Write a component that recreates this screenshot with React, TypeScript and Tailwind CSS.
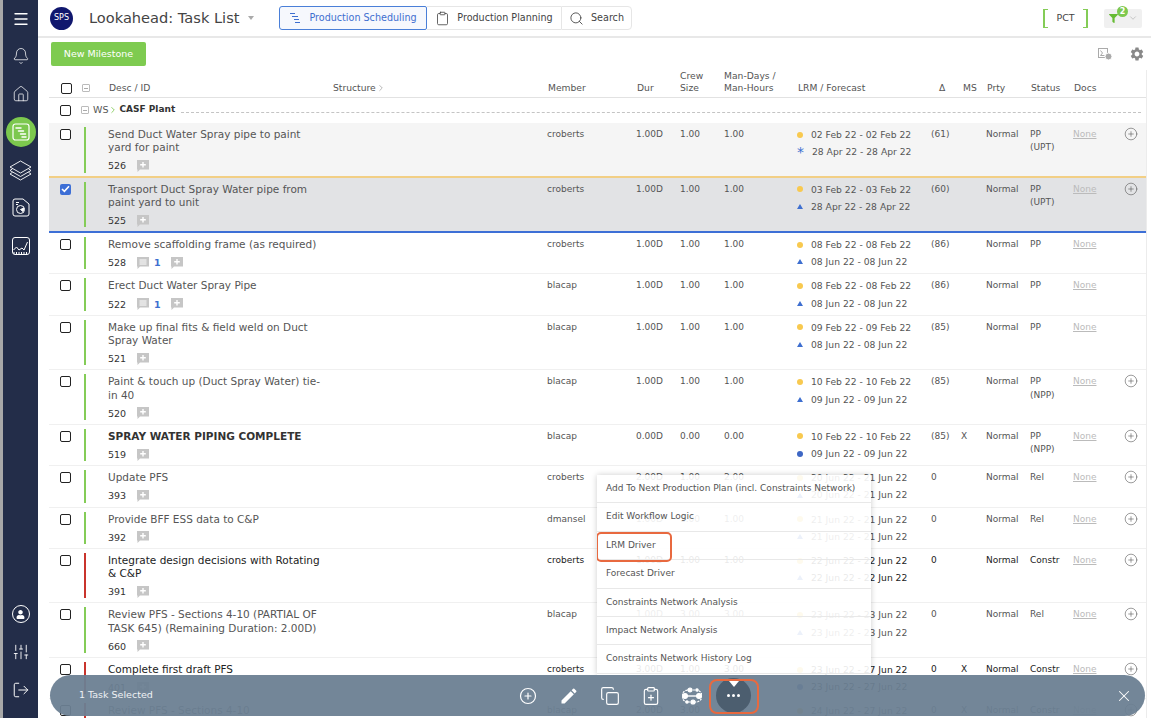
import { Bell, ChevronDown, ChevronRight, CirclePlus, Clipboard, ClipboardPlus, Copy, Home, LogOut, Menu, Search, SlidersVertical, X } from "lucide-react";
import { MdEdit, MdSettings } from "react-icons/md";
import { FaFilter, FaUser } from "react-icons/fa";

type Task = {
  lines: string[];
  id: string;
  bold?: boolean;
  red?: boolean;
  dark?: boolean;
  who: string;
  dur: string;
  crew: string;
  man: string;
  lrm: string;
  fc: string;
  mark?: "star" | "tri" | "dot";
  delta: string;
  ms?: string;
  status: string[];
  plus?: boolean;
  notes?: boolean;
  tone?: "soft" | "selected";
};

const tasks: Task[] = [
  { lines: ["Send Duct Water Spray pipe to paint", "yard for paint"], id: "526", who: "croberts", dur: "1.00D", crew: "1.00", man: "1.00", lrm: "02 Feb 22 - 02 Feb 22", fc: "28 Apr 22 - 28 Apr 22", mark: "star", delta: "(61)", status: ["PP", "(UPT)"], plus: true, tone: "soft" },
  { lines: ["Transport Duct Spray Water pipe from", "paint yard to unit"], id: "525", who: "croberts", dur: "1.00D", crew: "1.00", man: "1.00", lrm: "03 Feb 22 - 03 Feb 22", fc: "28 Apr 22 - 28 Apr 22", delta: "(60)", status: ["PP", "(UPT)"], plus: true, tone: "selected" },
  { lines: ["Remove scaffolding frame (as required)"], id: "528", notes: true, who: "croberts", dur: "1.00D", crew: "1.00", man: "1.00", lrm: "08 Feb 22 - 08 Feb 22", fc: "08 Jun 22 - 08 Jun 22", delta: "(86)", status: ["PP"] },
  { lines: ["Erect Duct Water Spray Pipe"], id: "522", notes: true, who: "blacap", dur: "1.00D", crew: "1.00", man: "1.00", lrm: "08 Feb 22 - 08 Feb 22", fc: "08 Jun 22 - 08 Jun 22", delta: "(86)", status: ["PP"] },
  { lines: ["Make up final fits & field weld on Duct", "Spray Water"], id: "521", who: "blacap", dur: "1.00D", crew: "1.00", man: "1.00", lrm: "09 Feb 22 - 09 Feb 22", fc: "08 Jun 22 - 08 Jun 22", delta: "(85)", status: ["PP"] },
  { lines: ["Paint & touch up (Duct Spray Water) tie-", "in 40"], id: "520", who: "blacap", dur: "1.00D", crew: "1.00", man: "1.00", lrm: "10 Feb 22 - 10 Feb 22", fc: "09 Jun 22 - 09 Jun 22", delta: "(85)", status: ["PP", "(NPP)"], plus: true },
  { lines: ["SPRAY WATER PIPING COMPLETE"], id: "519", bold: true, who: "blacap", dur: "0.00D", crew: "0.00", man: "0.00", lrm: "10 Feb 22 - 10 Feb 22", fc: "09 Jun 22 - 09 Jun 22", mark: "dot", delta: "(85)", ms: "X", status: ["PP", "(NPP)"], plus: true },
  { lines: ["Update PFS"], id: "393", who: "croberts", dur: "2.00D", crew: "1.00", man: "2.00", lrm: "20 Jun 22 - 21 Jun 22", fc: "20 Jun 22 - 21 Jun 22", delta: "0", status: ["Rel"], plus: true },
  { lines: ["Provide BFF ESS data to C&P"], id: "392", who: "dmansel", dur: "1.00D", crew: "1.00", man: "1.00", lrm: "21 Jun 22 - 21 Jun 22", fc: "21 Jun 22 - 21 Jun 22", delta: "0", status: ["Rel"], plus: true },
  { lines: ["Integrate design decisions with Rotating", "& C&P"], id: "391", red: true, dark: true, who: "croberts", dur: "1.00D", crew: "1.00", man: "1.00", lrm: "22 Jun 22 - 22 Jun 22", fc: "22 Jun 22 - 22 Jun 22", delta: "0", status: ["Constr"], plus: true },
  { lines: ["Review PFS - Sections 4-10 (PARTIAL OF", "TASK 645) (Remaining Duration: 2.00D)"], id: "660", who: "blacap", dur: "1.00D", crew: "3.00", man: "3.00", lrm: "23 Jun 22 - 23 Jun 22", fc: "23 Jun 22 - 23 Jun 22", delta: "0", status: ["Rel"], plus: true },
  { lines: ["Complete first draft PFS"], id: "401", red: true, dark: true, who: "croberts", dur: "3.00D", crew: "1.00", man: "3.00", lrm: "23 Jun 22 - 27 Jun 22", fc: "23 Jun 22 - 27 Jun 22", mark: "dot", delta: "0", ms: "X", status: ["Constr"], plus: true },
  { lines: ["Review PFS - Sections 4-10"], id: "402", red: true, who: "blacap", dur: "2.00D", crew: "3.00", man: "6.00", lrm: "24 Jun 22 - 27 Jun 22", fc: "24 Jun 22 - 27 Jun 22", delta: "0", ms: "X", status: ["Constr"], plus: true },
];

const menuItems = [
  "Add To Next Production Plan (incl. Constraints Network)",
  "Edit Workflow Logic",
  "LRM Driver",
  "Forecast Driver",
  "Constraints Network Analysis",
  "Impact Network Analysis",
  "Constraints Network History Log",
];

const columns = "grid grid-cols-[35px_24px_439px_89px_44px_44px_73px_134px_30px_25px_44px_43px_51px_22px]";

function TaskListIcon({ size = 18 }: { size?: number }) {
  return (
    <svg width={size} height={size} viewBox="0 0 18 18" fill="none" stroke="white" strokeWidth="1.2" strokeLinecap="round">
      <rect x="1" y="1" width="16" height="16" rx="2.5" />
      <path d="M4 5h5M6.5 8h5M8.5 11h5M10 14h4" strokeWidth="1.5" />
    </svg>
  );
}

function LayersIcon() {
  return (
    <svg width="23" height="23" viewBox="0 0 23 23" fill="none" stroke="white" strokeWidth="0.9" strokeLinejoin="round">
      <path d="M11.5 2L22 8l-10.5 6L1 8z" />
      <path d="M3.5 9.8L1 11.5l10.5 6 10.5-6-2.5-1.7" />
      <path d="M3.5 13.3L1 15l10.5 6L22 15l-2.5-1.7" />
    </svg>
  );
}

function ReportIcon() {
  return (
    <svg width="18" height="19" viewBox="0 0 18 19" fill="none" stroke="white" strokeWidth="1">
      <path d="M3 1h8l6 5v10a2 2 0 0 1-2 2H3a2 2 0 0 1-2-2V3a2 2 0 0 1 2-2z" />
      <path d="M4 4.5h3M4 6.5h2" />
      <circle cx="8.5" cy="11.5" r="4" />
      <path d="M8.5 11.5l3.5-1.5-1 3.5z" fill="white" />
    </svg>
  );
}

function ChartIcon() {
  return (
    <svg width="18" height="18" viewBox="0 0 18 18" fill="none" stroke="white" strokeWidth="1">
      <rect x="0.5" y="0.5" width="17" height="17" rx="2.5" />
      <path d="M1.5 13l3-3 2.5 3 3-2 2 2 3.5-8" />
      <path d="M1.5 16h15" strokeDasharray="1 1.5" strokeWidth="2" />
    </svg>
  );
}

function NoteIcon({ lined }: { lined?: boolean }) {
  return (
    <svg width="12" height="12" viewBox="0 0 12 12" className="shrink-0">
      <path d="M0 0h12v9.5H3L0.5 12V9.5H0z" fill="#c6c6c6" />
      {lined ? (
        <path d="M2.5 3h7M2.5 5h7M2.5 7h7" stroke="white" strokeWidth="1" />
      ) : (
        <path d="M6 2v5.5M3.2 4.75h5.6" stroke="white" strokeWidth="1.4" />
      )}
    </svg>
  );
}

function WorkflowIcon() {
  return (
    <svg width="20" height="20" viewBox="0 0 20 20" fill="white" stroke="white" strokeWidth="1.2">
      <path d="M5 4h9a5 5 0 0 1 0 12H6a6 6 0 0 1 0-12" fill="none" strokeDasharray="2 1" />
      <path d="M3 10h14" strokeWidth="1.4" />
      <circle cx="3" cy="10" r="2.4" />
      <circle cx="17" cy="10" r="2.4" />
      <circle cx="8" cy="4" r="2" />
      <circle cx="11" cy="16" r="2" />
      <circle cx="15" cy="4" r="1.2" />
      <circle cx="5" cy="16" r="1.2" />
    </svg>
  );
}

function SquareMinus() {
  return (
    <span className="flex w-[8px] h-[8px] items-center justify-center border border-[#bbb] rounded-[1px]">
      <span className="w-[4px] h-px bg-[#aaa]" />
    </span>
  );
}

function Marker({ mark }: { mark?: Task["mark"] }) {
  if (mark === "star") return <span className="w-[15px] pt-[2px] text-[#3e6fd0] text-[14px] leading-[13px]">*</span>;
  if (mark === "dot") return <span className="w-[6px] h-[6px] mr-[8px] rounded-full bg-[#3e67c4]" />;
  return <span className="w-0 h-0 mr-[8px] border-x-[3px] border-x-transparent border-b-[5px] border-b-[#3e6fd0]" />;
}

function Checkbox({ checked }: { checked?: boolean }) {
  if (checked) {
    return (
      <span className="flex w-[11px] h-[11px] ml-[11px] mt-[1px] rounded-[2px] bg-[#3d6fd6] items-center justify-center">
        <svg width="9" height="8" viewBox="0 0 9 8" fill="none" stroke="white" strokeWidth="1.6">
          <path d="M1 4l2.4 2.4L8 1.2" />
        </svg>
      </span>
    );
  }
  return <span className="block w-[11px] h-[11px] ml-[11px] mt-[1px] rounded-[2px] border-[1.5px] border-[#222] bg-white" />;
}

function TaskRow({ task }: { task: Task }) {
  const rowTone =
    task.tone === "soft"
      ? "bg-[#f5f5f5] border-b-2 border-[#f2cf85] pb-[2px]"
      : task.tone === "selected"
        ? "bg-[#e2e3e5] border-b-2 border-[#3d6fd6] pb-[3px]"
        : "border-b border-[#f0f0f0] pb-[3px]";
  const ink = task.dark ? "text-[#222]" : "text-[#555]";

  return (
    <div className={`${columns} pt-[5px] text-[9px] leading-[13.2px] ${rowTone} ${ink}`}>
      <div>
        <Checkbox checked={task.tone === "selected"} />
      </div>
      <div>
        <div className={`w-[2px] h-full -mt-[1px] ${task.red ? "bg-[#c9342c]" : "bg-[#84cc57]"}`} />
      </div>
      <div>
        <div className={`w-[240px] text-[10.5px] whitespace-nowrap ${task.bold ? "font-bold text-[#333]" : ""}`}>
          {task.lines.map((line) => (
            <div key={line}>{line}</div>
          ))}
        </div>
        <div className="h-[19.15px] pt-[4px] flex items-center text-[#333] text-[9.5px]">
          <span className="w-[29px]">{task.id}</span>
          {task.notes && (
            <>
              <NoteIcon lined />
              <span className="w-[22px] pl-[5px] text-[#3e6fd0] font-bold">1</span>
            </>
          )}
          <NoteIcon />
        </div>
      </div>
      <div>{task.who}</div>
      <div>{task.dur}</div>
      <div>{task.crew}</div>
      <div>{task.man}</div>
      <div className="text-[9.2px]">
        <div className="flex items-center h-[13.2px]">
          <span className="w-[6px] h-[6px] mr-[8px] rounded-full bg-[#f8c94f]" />
          {task.lrm}
        </div>
        <div className="flex items-center h-[13.2px] mt-[4px]">
          <Marker mark={task.mark ?? "tri"} />
          {task.fc}
        </div>
      </div>
      <div>{task.delta}</div>
      <div>{task.ms}</div>
      <div>Normal</div>
      <div>
        {task.status.map((s) => (
          <div key={s}>{s}</div>
        ))}
      </div>
      <div>
        <span className="text-[#bbb] underline">None</span>
      </div>
      <div>{task.plus && <CirclePlus size={14} strokeWidth={1} className="text-[#555] -mt-[1px]" />}</div>
    </div>
  );
}

export default function App() {
  return (
    <div className="relative flex h-[718px] w-[1170px] overflow-hidden bg-white font-['DejaVu_Sans',sans-serif] text-[#555]">
      {/* Sidebar */}
      <aside className="flex w-[38px] shrink-0 flex-col items-center border-l-[3px] border-[#a8a8a8] bg-[#232d49] text-white pb-[9px]">
        <div className="h-[37px] flex items-center">
          <Menu size={18} strokeWidth={1.8} />
        </div>
        <div className="h-[38px] flex items-center">
          <Bell size={18} strokeWidth={1} />
        </div>
        <div className="h-[38px] flex items-center">
          <Home size={18} strokeWidth={1} />
        </div>
        <div className="h-[37px] flex items-center">
          <span className="w-[30px] h-[30px] flex items-center justify-center rounded-full bg-[#7cc84e]">
            <TaskListIcon />
          </span>
        </div>
        <div className="h-[38px] pt-[2px] flex items-center">
          <LayersIcon />
        </div>
        <div className="h-[38px] flex items-center">
          <ReportIcon />
        </div>
        <div className="h-[39px] flex items-center">
          <ChartIcon />
        </div>
        <div className="flex-1" />
        <div className="h-[38px] flex items-center">
          <span className="w-[18px] h-[18px] rounded-full border border-white flex items-center justify-center">
            <FaUser size={9} />
          </span>
        </div>
        <div className="h-[38px] flex items-center">
          <SlidersVertical size={18} strokeWidth={1.2} />
        </div>
        <div className="h-[38px] flex items-center">
          <LogOut size={18} strokeWidth={1.3} />
        </div>
      </aside>

      {/* Main */}
      <main className="flex-1 min-w-0">
        <header className="flex h-[38px] items-center mr-[19px] pl-[12px] pr-[9px] border-b-2 border-[#e8e8e8]">
          <span className="w-[23px] h-[23px] rounded-full bg-[#10176e] text-white text-[8px] flex items-center justify-center">SPS</span>
          <h1 className="ml-[16px] w-[159px] text-[14.6px] text-[#444] font-normal whitespace-nowrap">Lookahead: Task List</h1>
          <span className="w-0 h-0 border-x-[3.5px] border-x-transparent border-t-[4px] border-t-[#aaa]" />
          <div className="ml-[25px] flex h-[24px] text-[9.6px]">
            <button className="w-[148px] flex items-center justify-center gap-[8px] rounded-l-[3px] rounded-r-[2px] border border-[#4a7fd8] bg-[#f6f8fd] text-[#3e6fd0]">
              <svg width="12" height="12" viewBox="0 0 12 12" stroke="#3e6fd0" strokeWidth="1.2">
                <path d="M1 1.5h5M3 4.5h6M5 7.5h5M6 10.5h5" />
              </svg>
              Production Scheduling
            </button>
            <button className="w-[134px] flex items-center justify-center gap-[7px] border-y border-[#e6e6e6] text-[#444]">
              <Clipboard size={15} strokeWidth={1.3} />
              Production Planning
            </button>
            <button className="w-[71px] flex items-center justify-center gap-[7px] rounded-r-[4px] border border-[#e6e6e6] text-[#444]">
              <Search size={15} strokeWidth={1.4} />
              Search
            </button>
          </div>
          <div className="ml-auto w-[45px] h-[19px] flex items-center justify-center border-x-2 border-[#84cc57] relative text-[9.5px] text-[#444]">
            <span className="absolute left-0 top-0 w-[3px] h-[19px] border-y border-[#84cc57]" />
            <span className="absolute right-0 top-0 w-[3px] h-[19px] border-y border-[#84cc57]" />
            PCT
          </div>
          <div className="relative ml-[16px] w-[38px] h-[19px] rounded-[2px] bg-[#f0f0f0] flex items-center pl-[5px] gap-[5px]">
            <FaFilter size={9} className="text-[#66bb33]" />
            <ChevronDown size={10} strokeWidth={1} className="text-[#888] ml-[5px]" />
            <span className="absolute left-[13px] -top-[3px] w-[11px] h-[11px] rounded-full bg-[#7cc84e] text-white text-[8px] leading-[11px] text-center font-bold">2</span>
          </div>
        </header>

        <div className="flex h-[32px] items-center pl-[13px] pr-[25px]">
          <button className="w-[95px] h-[24px] rounded-[2px] bg-[#7ecb50] text-white text-[9.5px]">New Milestone</button>
          <svg width="14" height="12" viewBox="0 0 14 12" className="ml-auto mr-[17px]" fill="none" stroke="#aaa">
            <rect x="0.5" y="0.5" width="9" height="9" />
            <path d="M2.5 2.5l2 2.5-2 2.5h4" />
            <circle cx="10.5" cy="8.5" r="3.5" fill="#aaa" stroke="white" />
          </svg>
          <MdSettings size={16} className="text-[#888]" />
        </div>

        {/* Table */}
        <div className="ml-[11px] mr-[23px] border-r border-[#ececec]">
          <div className={`${columns} h-[28px] items-end pb-[4px] text-[9.2px] leading-[12px] border-b border-[#e2e2e2]`}>
            <div>
              <span className="block w-[11px] h-[11px] ml-[12px] rounded-[2px] border-[1.5px] border-[#222]" />
            </div>
            <div className="pb-[2px] -ml-[2px]">
              <SquareMinus />
            </div>
            <div className="relative pl-[1px]">
              Desc / ID
              <span className="absolute left-[225px] bottom-0 flex items-center">
                Structure <ChevronRight size={10} strokeWidth={1} />
              </span>
            </div>
            <div className="pl-[1px]">Member</div>
            <div className="pl-[1px]">Dur</div>
            <div>
              Crew
              <br />
              Size
            </div>
            <div className="whitespace-nowrap">
              Man-Days /
              <br />
              Man-Hours
            </div>
            <div className="pl-[1px]">LRM / Forecast</div>
            <div className="pl-[8px]">Δ</div>
            <div className="pl-[2px]">MS</div>
            <div className="pl-[1px]">Prty</div>
            <div className="pl-[1px]">Status</div>
            <div className="pl-[1px]">Docs</div>
            <div />
          </div>

          <div className="flex h-[25px] items-center pr-[5px] pb-[1px] text-[9.5px]">
            <span className="block w-[11px] h-[11px] ml-[11px] rounded-[2px] border-[1.5px] border-[#222]" />
            <span className="ml-[10px]">
              <SquareMinus />
            </span>
            <span className="ml-[4px]">WS</span>
            <ChevronRight size={10} strokeWidth={2} className="text-[#7cc84e]" />
            <span className="font-bold text-[#333] text-[9px] ml-[1px]">CASF Plant</span>
            <span className="flex-1 ml-[6px] mt-[4px] border-t border-dashed border-[#c4c4c4]" />
          </div>

          {tasks.map((task) => (
            <TaskRow key={task.id} task={task} />
          ))}
        </div>
      </main>

      {/* Actions menu */}
      <div className="absolute left-[597px] top-[475px] w-[274px] h-[200px] overflow-hidden bg-white/90 shadow-[0_0_6px_rgba(0,0,0,0.2)] text-[9px] text-[#555]">
        {menuItems.map((item) => (
          <div key={item} className="relative h-[28.4px] flex items-center px-[9px] border-b border-[#e8e8e8] whitespace-nowrap">
            {item}
            {item === "LRM Driver" && <span className="absolute -left-[1px] top-0 w-[76px] h-[30px] rounded-[5px] border-2 border-[#e8693f]" />}
          </div>
        ))}
      </div>

      {/* Selection bar */}
      <div className="absolute left-[50px] top-[675px] w-[1095px] h-[41px] rounded-full bg-[#6b7f92]/95 flex items-center pl-[29px] text-white">
        <span className="w-[428.5px] text-[9.5px] text-[#eef1f4]">1 Task Selected</span>
        <div className="w-[41px] flex justify-center">
          <CirclePlus size={18} strokeWidth={1.6} />
        </div>
        <div className="w-[41px] flex justify-center">
          <MdEdit size={20} />
        </div>
        <div className="w-[41px] flex justify-center">
          <Copy size={20} strokeWidth={1.4} />
        </div>
        <div className="w-[41px] flex justify-center">
          <ClipboardPlus size={20} strokeWidth={1.4} />
        </div>
        <div className="w-[41px] flex justify-center">
          <WorkflowIcon />
        </div>
        <div className="relative w-[41px] flex justify-center">
          <span className="w-[35px] h-[35px] rounded-full bg-[#4c5e6f] flex items-center justify-center gap-[2px]">
            <span className="w-[3px] h-[3px] rounded-full bg-white" />
            <span className="w-[3px] h-[3px] rounded-full bg-white" />
            <span className="w-[3px] h-[3px] rounded-full bg-white" />
          </span>
          <span className="absolute left-[16px] top-[3px] w-0 h-0 border-x-[5px] border-x-transparent border-t-[6px] border-t-white" />
          <span className="absolute -left-[4px] -right-[5px] top-[1px] -bottom-[1px] rounded-[8px] border-2 border-[#e8693f]" />
        </div>
        <X size={18} strokeWidth={1.4} className="ml-auto mr-[12px]" />
      </div>
    </div>
  );
}
